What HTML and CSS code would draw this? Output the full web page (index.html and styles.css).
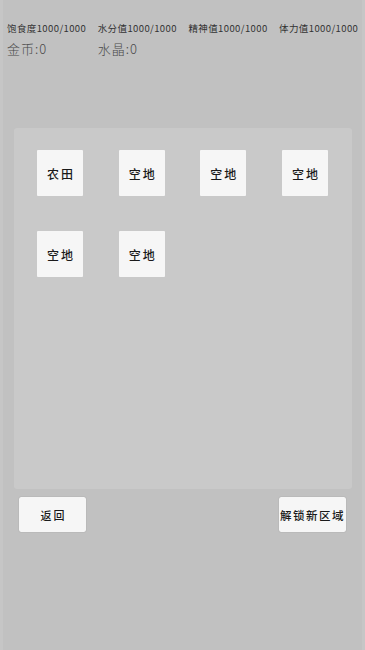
FILE: index.html
```html
<!DOCTYPE html>
<html lang="zh">
<head>
<meta charset="utf-8">
<title>农场</title>
<link rel="stylesheet" href="styles.css">
</head>
<body>
<div class="screen">
  <div class="header">
    <div class="stats">
      <span>饱食度1000/1000</span>
      <span>水分值1000/1000</span>
      <span>精神值1000/1000</span>
      <span>体力值1000/1000</span>
    </div>
    <div class="currency">
      <span>金币:0</span>
      <span>水晶:0</span>
    </div>
  </div>
  <div class="panel">
    <div class="tiles">
      <div class="tile">农田</div>
      <div class="tile">空地</div>
      <div class="tile">空地</div>
      <div class="tile">空地</div>
      <div class="tile">空地</div>
      <div class="tile">空地</div>
    </div>
  </div>
  <div class="footer">
    <button class="btn">返回</button>
    <button class="btn btn-wide">解锁新区域</button>
  </div>
</div>
</body>
</html>
```
FILE: styles.css
```css
html, body {
  margin: 0;
  padding: 0;
  background: #c1c1c1;
}
body {
  font-family: "Noto Sans CJK SC", "Noto Sans", sans-serif;
  color: #2a2a2a;
}
.screen {
  width: 365px;
  height: 650px;
  box-sizing: border-box;
  border-left: 3px solid #c6c6c6;
  border-right: 3px solid #c6c6c6;
}
.header {
  padding: 21px 0 0 4px;
}
.stats {
  display: grid;
  grid-template-columns: repeat(4, 90.7px);
  font-size: 9.5px;
  line-height: 14px;
  letter-spacing: 0.4px;
  white-space: nowrap;
  color: #333;
}
.currency {
  display: grid;
  grid-template-columns: repeat(4, 90.7px);
  font-size: 13px;
  line-height: 18px;
  letter-spacing: 1px;
  margin-top: 5px;
  color: #4a4a4a;
  font-weight: 300;
}
.panel {
  margin: 70px 0 0 11px;
  width: 338px;
  height: 361px;
  box-sizing: border-box;
  background: #c9c9c9;
  border-radius: 3px;
  padding: 22px 24px 0 23px;
}
.tiles {
  display: grid;
  grid-template-columns: repeat(4, 46px);
  justify-content: space-between;
  row-gap: 35px;
}
.tile {
  width: 46px;
  height: 46px;
  background: #f6f6f6;
  border-radius: 1px;
  display: flex;
  align-items: center;
  justify-content: center;
  font-size: 12px;
  letter-spacing: 2px;
  text-indent: 2px;
  color: #1a1a1a;
  font-weight: 500;
}
.footer {
  display: flex;
  justify-content: space-between;
  margin-top: 8px;
  padding: 0 16px;
}
.btn {
  width: 67px;
  height: 35px;
  padding: 0;
  border: none;
  border-radius: 2px;
  background: #f6f6f6;
  box-shadow: 0 0 1px rgba(0,0,0,0.35);
  font-family: "Noto Sans CJK SC", "Noto Sans", sans-serif;
  font-size: 11px;
  letter-spacing: 2px;
  text-indent: 2px;
  color: #1a1a1a;
  font-weight: 500;
  white-space: nowrap;
}
.btn-wide {
  letter-spacing: 1.5px;
  text-indent: 0;
  font-size: 11.5px;
  overflow: hidden;
}
```
